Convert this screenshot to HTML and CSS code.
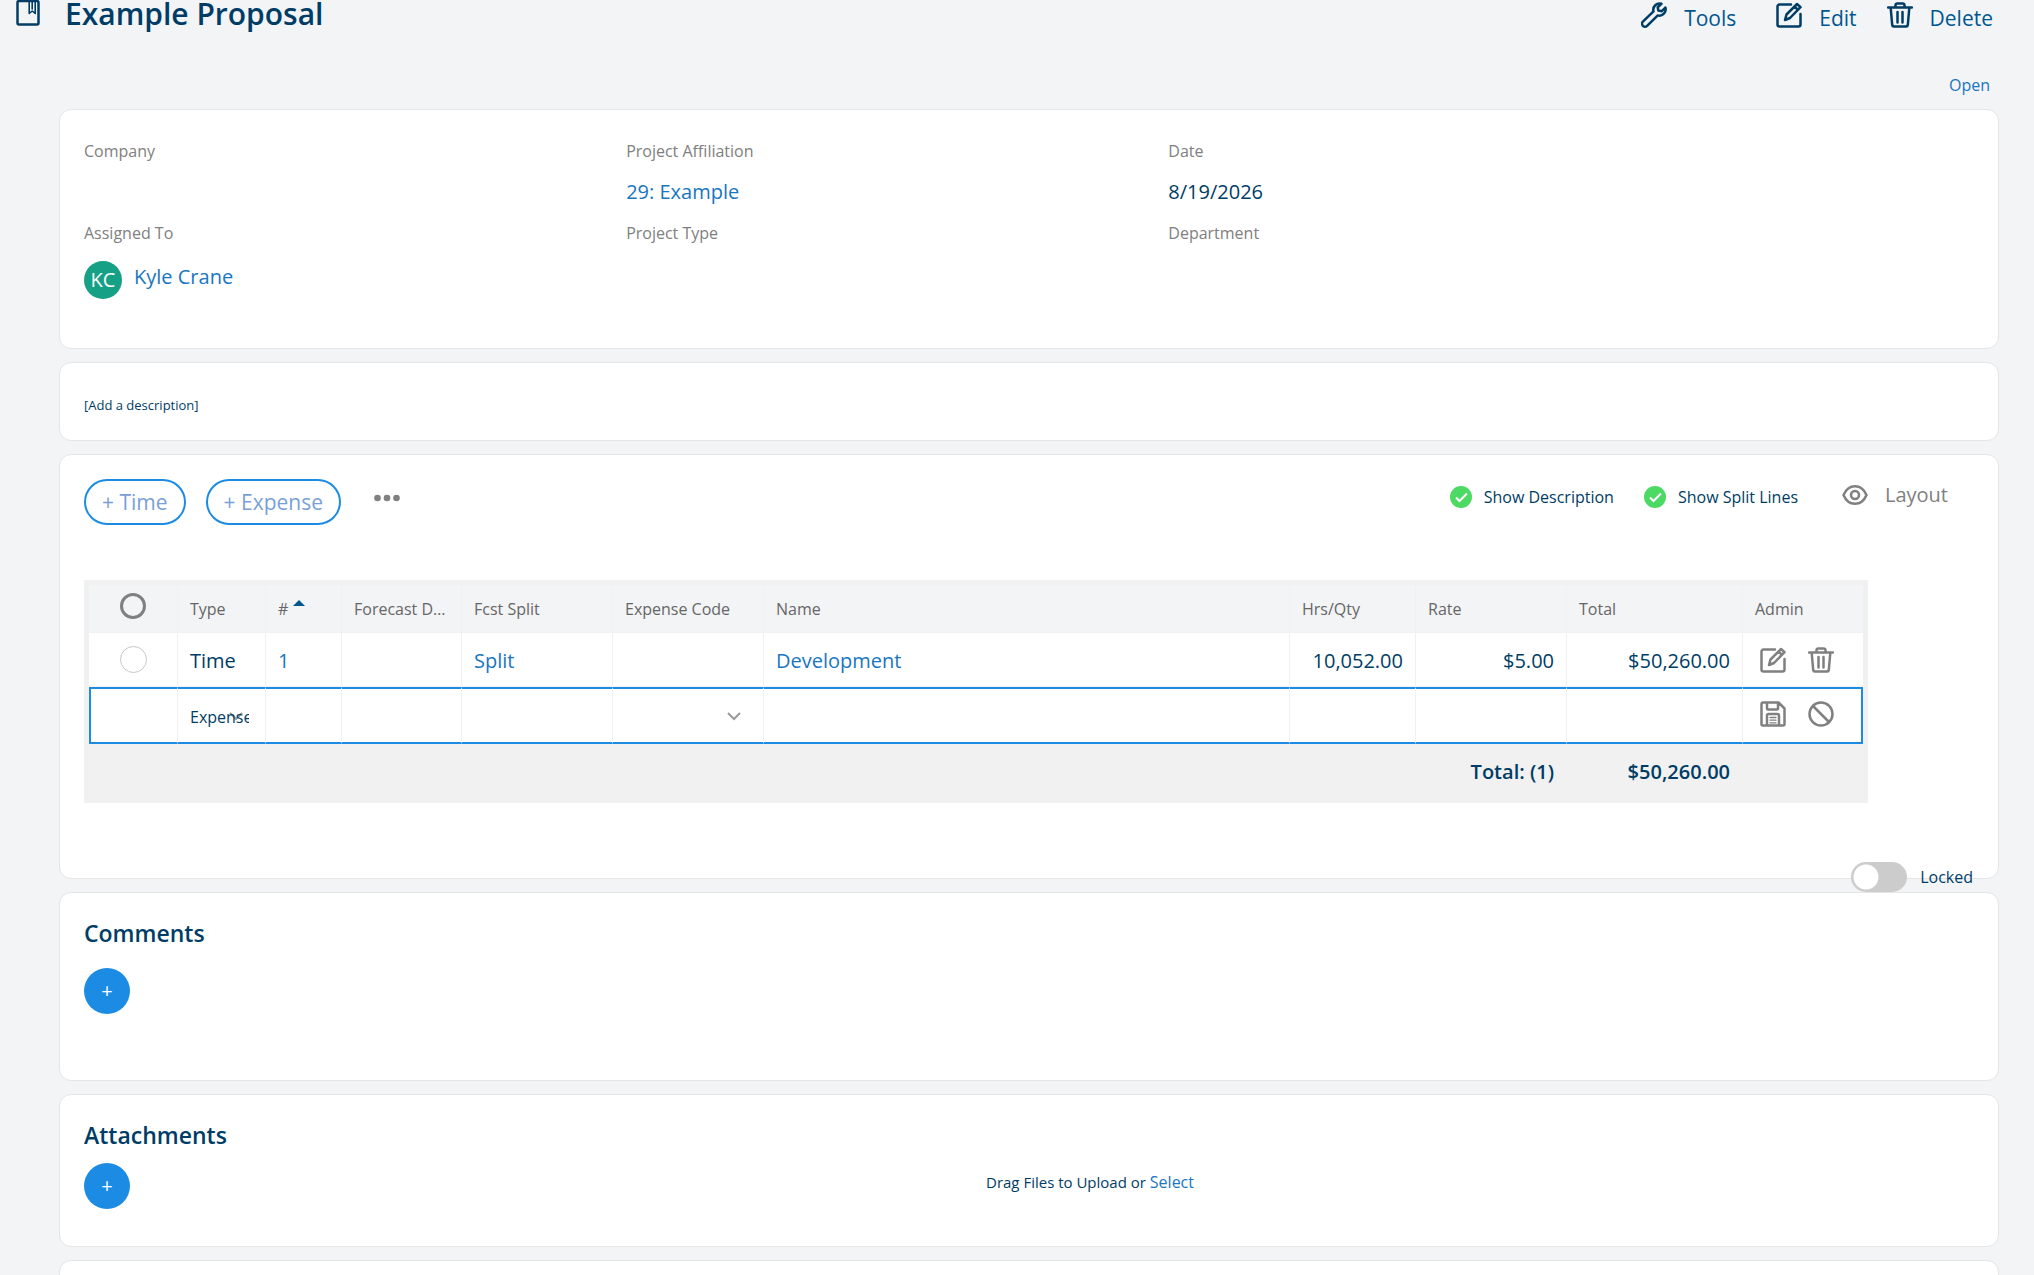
FILE: index.html
```
<!DOCTYPE html>
<html lang="en">
<head>
  <meta charset="UTF-8" />
  <title>Example Proposal</title>
  <meta name="viewport" content="width=device-width, initial-scale=1.0" />
  <link rel="stylesheet" href="styles.css">
</head>
<body>
  <!-- shared icons -->
  <svg class="sprite" aria-hidden="true">
    <symbol id="icon-edit" viewBox="0 0 26 26">
      <path d="M15 2.500H3.500a2 2 0 0 0-2 2V22.500a2 2 0 0 0 2 2H22.500a2 2 0 0 0 2-2V12" />
      <path d="M9 18l1.500-5.500L21 2l3.500 3.200L14 16z M18.500 4.500l3.500 3.300" />
    </symbol>
    <symbol id="icon-trash" viewBox="0 0 26 26">
      <path d="M1 5.500h24M8.500 5V3.200a1.700 1.700 0 0 1 1.700-1.700h5.600a1.700 1.700 0 0 1 1.700 1.700V5M3.700 6l1.500 17a1.700 1.700 0 0 0 1.700 1.500h12.200a1.700 1.700 0 0 0 1.700-1.500l1.500-17M10.500 10v10.500M15.500 10v10.500" />
    </symbol>
  </svg>

  <header class="page-header">
    <svg class="icon title-icon" viewBox="0 0 26 26">
      <rect x="2.500" y="1" width="21" height="23.500" rx="1.500" />
      <path class="ribbon" d="M14.200 2v11.500l3-2.500 3 2.500V2M17.200 2v7" />
    </svg>
    <h1>Example Proposal</h1>
    <nav class="actions">
      <button type="button" class="action">
        <svg class="icon" viewBox="0 0 26 26">
          <path d="M20.500 1.800a6.300 6.300 0 0 0-8 7.600L1.900 19.600a2.900 2.900 0 0 0 4.200 4.200L16.800 13.400a6.300 6.300 0 0 0 7.600-7.900l-3.600 3.700-3.500-.7-.6-3.300z" />
        </svg>
        Tools
      </button>
      <button type="button" class="action action-edit"><svg class="icon"><use href="#icon-edit" /></svg>Edit</button>
      <button type="button" class="action action-delete"><svg class="icon"><use href="#icon-trash" /></svg>Delete</button>
    </nav>
  </header>

  <main>
    <div class="status"><a href="#">Open</a></div>

    <section class="card details">
      <div class="field">
        <div class="label">Company</div>
        <div class="value"></div>
      </div>
      <div class="field">
        <div class="label">Project Affiliation</div>
        <div class="value"><a href="#">29: Example</a></div>
      </div>
      <div class="field">
        <div class="label">Date</div>
        <div class="value">8/19/2026</div>
      </div>
      <div class="field">
        <div class="label">Assigned To</div>
        <div class="person"><span class="avatar">KC</span><a href="#">Kyle Crane</a></div>
      </div>
      <div class="field">
        <div class="label">Project Type</div>
      </div>
      <div class="field">
        <div class="label">Department</div>
      </div>
    </section>

    <section class="card description">
      <button type="button">[Add a description]</button>
    </section>

    <section class="card lines">
      <div class="toolbar">
        <button type="button" class="pill">+ Time</button>
        <button type="button" class="pill">+ Expense</button>
        <button type="button" class="more" aria-label="More">
          <svg width="26" height="8" viewBox="0 0 26 8"><circle cx="3.500" cy="4" r="3.300" /><circle cx="13" cy="4" r="3.300" /><circle cx="22.500" cy="4" r="3.300" /></svg>
        </button>
        <div class="view-options">
          <label class="check"><input type="checkbox" checked />Show Description</label>
          <label class="check"><input type="checkbox" checked />Show Split Lines</label>
          <button type="button" class="layout">
            <svg class="icon" viewBox="0 0 26 26">
              <path d="M1.500 13C4 7 8.500 4.200 13 4.200S22 7 24.500 13C22 19 17.500 21.800 13 21.800S4 19 1.500 13z" />
              <circle cx="13" cy="13" r="4" />
            </svg>
            Layout
          </button>
        </div>
      </div>

      <div class="grid">
        <table>
          <colgroup>
            <col class="c-check"><col class="c-type"><col class="c-num"><col class="c-date"><col class="c-code"><col class="c-code"><col>
            <col class="c-qty"><col class="c-code"><col class="c-total"><col class="c-date">
          </colgroup>
          <thead>
            <tr>
              <th class="pick"><input type="radio" name="all" aria-label="Select all" /></th>
              <th>Type</th>
              <th># <span class="sort"></span></th>
              <th>Forecast Date</th>
              <th>Fcst Split</th>
              <th>Expense Code</th>
              <th>Name</th>
              <th>Hrs/Qty</th>
              <th>Rate</th>
              <th>Total</th>
              <th>Admin</th>
            </tr>
          </thead>
          <tbody>
            <tr>
              <td class="pick"><input type="radio" name="line" aria-label="Select line 1" /></td>
              <td>Time</td>
              <td><a href="#">1</a></td>
              <td></td>
              <td><a href="#">Split</a></td>
              <td></td>
              <td><a href="#">Development</a></td>
              <td class="num">10,052.00</td>
              <td class="num">$5.00</td>
              <td class="num">$50,260.00</td>
              <td>
                <div class="admin">
                  <button type="button" aria-label="Edit"><svg class="icon"><use href="#icon-edit" /></svg></button>
                  <button type="button" aria-label="Delete"><svg class="icon"><use href="#icon-trash" /></svg></button>
                </div>
              </td>
            </tr>
            <tr class="editing">
              <td></td>
              <td><select aria-label="Type"><option>Expense</option><option>Time</option></select></td>
              <td></td>
              <td><input type="text" aria-label="Forecast Date" /></td>
              <td></td>
              <td><select aria-label="Expense Code"><option></option></select></td>
              <td><input type="text" aria-label="Name" /></td>
              <td><input type="text" aria-label="Hrs/Qty" /></td>
              <td><input type="text" aria-label="Rate" /></td>
              <td></td>
              <td>
                <div class="admin">
                  <button type="button" aria-label="Save">
                    <svg class="icon" viewBox="0 0 26 26">
                      <path d="M3 1.500h15.500l6 6V23a1.500 1.500 0 0 1-1.500 1.500H3A1.500 1.500 0 0 1 1.500 23V3A1.500 1.500 0 0 1 3 1.500zM7 2v5.500a1 1 0 0 0 1 1h9a1 1 0 0 0 1-1V2M7 24V14.500a1.500 1.500 0 0 1 1.500-1.500h9a1.500 1.500 0 0 1 1.500 1.500V24" />
                      <path class="thin" d="M10 16.500h6M10 19.200h6M10 21.900h6" />
                    </svg>
                  </button>
                  <button type="button" aria-label="Cancel">
                    <svg class="icon" viewBox="0 0 26 26"><circle cx="13" cy="13" r="11.500" /><path d="M5 5l16 16" /></svg>
                  </button>
                </div>
              </td>
            </tr>
          </tbody>
          <tfoot>
            <tr>
              <td colspan="9" class="num">Total: (1)</td>
              <td class="num">$50,260.00</td>
              <td></td>
            </tr>
          </tfoot>
        </table>
      </div>

      <label class="locked"><input type="checkbox" />Locked</label>
    </section>

    <section class="card comments">
      <h2>Comments</h2>
      <button type="button" class="add" aria-label="Add comment">+</button>
    </section>

    <section class="card attachments">
      <h2>Attachments</h2>
      <div class="upload">
        <button type="button" class="add" aria-label="Add attachment">+</button>
        <p>Drag Files to Upload or <a href="#">Select</a></p>
      </div>
    </section>

    <section class="card"></section>
  </main>
</body>
</html>
```
FILE: styles.css
```
* {
  box-sizing: border-box;
}

body {
  background-color: #f3f4f6;
  color: #003d66;
  font-family: "Open Sans", "Noto Sans", sans-serif;
  font-size: 20px;
  line-height: 28px;
  margin: 0;
  height: 100vh;
  overflow: hidden;
}

a {
  color: #1976bf;
  text-decoration: none;
}

button, input, select {
  font: inherit;
  color: inherit;
  background: none;
  border: none;
  padding: 0;
  margin: 0;
}

button {
  cursor: pointer;
}

h1, h2, p {
  margin: 0;
}

.sprite {
  display: none;
}

.icon {
  width: 26px;
  height: 26px;
  flex: none;
  display: block;
  fill: none;
  stroke: currentColor;
  stroke-width: 2.5;
  stroke-linecap: round;
  stroke-linejoin: round;
}

.icon .thin {
  stroke-width: 1.3;
}

.icon .ribbon {
  stroke-width: 1.6;
}

/* header */
.page-header {
  display: flex;
  align-items: flex-start;
  padding: 0 41px 0 15px;
}

h1 {
  font-size: 30px;
  line-height: 28px;
  font-weight: 600;
  margin-left: 24px;
}

.actions {
  display: flex;
  margin-left: auto;
}

.action {
  display: flex;
  gap: 17px;
  font-size: 21px;
  line-height: 36px;
  color: #00568f;
}

.action .icon {
  color: #003d66;
  margin-top: 2px;
}

.action-edit {
  margin-left: 40px;
}

.action-delete {
  margin-left: 30px;
}

/* cards */
main {
  padding: 37px 35px 0 59px;
}

.status {
  font-size: 16px;
  line-height: 24px;
  text-align: right;
  padding-right: 9px;
  margin-bottom: 12px;
}

.card {
  position: relative;
  background-color: #fff;
  border: 1px solid #e4e5e7;
  border-radius: 12px;
  padding: 24px;
  margin-bottom: 13px;
}

.details {
  display: grid;
  grid-template-columns: 2fr 2fr 3fr;
  column-gap: 5px;
  row-gap: 15px;
  padding-top: 29px;
  padding-bottom: 49px;
}

.label {
  font-size: 16px;
  line-height: 24px;
  color: #808080;
}

.value {
  min-height: 28px;
  margin-top: 15px;
}

.person {
  display: flex;
  gap: 12px;
  line-height: 32px;
  margin-top: 16px;
}

.avatar {
  width: 38px;
  height: 38px;
  border-radius: 50%;
  background-color: #16a085;
  color: #fff;
  line-height: 38px;
  text-align: center;
}

.description {
  padding-top: 28px;
  padding-bottom: 21px;
}

.description button {
  display: block;
  font-size: 13px;
}

/* line items */
.lines {
  padding-bottom: 75px;
}

.toolbar {
  display: flex;
  align-items: flex-start;
  gap: 20px;
  padding-right: 26px;
  margin-bottom: 55px;
}

.pill {
  height: 46px;
  padding: 0 16px;
  border: 2px solid #1b8be3;
  border-radius: 23px;
  font-size: 21px;
  color: #7a9fd8;
}

.more {
  height: 38px;
  margin-left: 13px;
}

.more svg {
  display: block;
  fill: #808080;
}

.view-options {
  display: flex;
  align-items: flex-start;
  gap: 30px;
  margin-left: auto;
}

.check {
  display: flex;
  align-items: center;
  gap: 12px;
  height: 36px;
  font-size: 16px;
}

.check input {
  appearance: none;
  width: 22px;
  height: 22px;
  border-radius: 50%;
  background: #4cd964 url('data:image/svg+xml,<svg xmlns="http://www.w3.org/2000/svg" viewBox="0 0 22 22"><path d="M6 11.500l3.500 3.500L17 7.500" fill="none" stroke="white" stroke-width="2"/></svg>');
}

.layout {
  display: flex;
  align-items: center;
  gap: 17px;
  height: 32px;
  margin-left: 14px;
  color: #808080;
}

.grid {
  background-color: #f1f1f1;
  padding: 5px;
  margin-right: 106px;
}

table {
  width: 100%;
  table-layout: fixed;
  border-collapse: separate;
  border-spacing: 0;
}

.c-check { width: 89px; }
.c-type { width: 88px; }
.c-num { width: 76px; }
.c-date { width: 120px; }
.c-code { width: 151px; }
.c-qty { width: 126px; }
.c-total { width: 176px; }

th, td {
  padding: 0 12px;
  border-right: 1px solid #f1f1f1;
  border-bottom: 1px solid #f1f1f1;
  text-align: left;
  white-space: nowrap;
}

th {
  height: 48px;
  background-color: #f3f4f6;
  color: #666;
  font-size: 16px;
  font-weight: 400;
  overflow: hidden;
  text-overflow: ellipsis;
}

td {
  height: 54px;
  padding-top: 2px;
  background-color: #fff;
}

th:last-child, tbody td:last-child {
  border-right: none;
}

.num {
  text-align: right;
}

.sort {
  display: inline-block;
  vertical-align: 9px;
  border: 6px solid transparent;
  border-top: none;
  border-bottom-color: #00568f;
}

.pick {
  padding: 0;
  text-align: center;
}

.pick input {
  appearance: none;
  display: block;
  width: 27px;
  height: 27px;
  margin: 0 auto;
  border: 1px solid #c4c8cc;
  border-radius: 50%;
}

th.pick {
  padding-bottom: 5px;
}

th.pick input {
  width: 26px;
  height: 26px;
  border: 3px solid #808080;
}

.admin {
  display: flex;
  gap: 22px;
  margin-left: 5px;
  margin-bottom: 2px;
  color: #808080;
}

.editing td {
  height: 57px;
  border-top: 2px solid #1b8be3;
  border-bottom: 2px solid #1b8be3;
}

.editing td:first-child {
  border-left: 2px solid #1b8be3;
}

.editing td:last-child {
  border-right: 2px solid #1b8be3;
}

.editing .admin {
  margin-bottom: 6px;
}

.editing input, .editing select {
  display: block;
  width: 100%;
  height: 40px;
  font-size: 16px;
}

.editing td:has(select) {
  padding-right: 16px;
}

.editing select {
  appearance: none;
  background: url('data:image/svg+xml,<svg xmlns="http://www.w3.org/2000/svg" width="14" height="9"><path d="M1 1l6 6 6-6" fill="none" stroke="%23999" stroke-width="2"/></svg>') no-repeat right 6px center;
}

tfoot td {
  background-color: #f1f1f1;
  font-weight: 600;
}

/* sits across the lower edge of the card */
.locked {
  position: absolute;
  right: 25px;
  bottom: -14px;
  display: flex;
  align-items: center;
  gap: 13px;
  font-size: 16px;
  z-index: 1;
}

.locked input {
  appearance: none;
  width: 56px;
  height: 30px;
  border-radius: 15px;
  background: #ccc radial-gradient(circle at 15px 15px, #fff 12px, transparent 13px);
}

/* comments and attachments */
h2 {
  font-size: 23px;
  line-height: 32px;
  font-weight: 600;
}

.add {
  display: block;
  width: 46px;
  height: 46px;
  border-radius: 50%;
  background-color: #1b8be3;
  color: #fff;
}

.comments {
  padding-bottom: 66px;
}

.comments .add {
  margin-top: 19px;
}

.attachments {
  padding-bottom: 37px;
}

.upload {
  display: flex;
  margin-top: 12px;
}

.upload p {
  flex: 1;
  margin-left: 76px;
  font-size: 15px;
  line-height: 38px;
  text-align: center;
}

.upload a {
  font-size: 16px;
}
```
